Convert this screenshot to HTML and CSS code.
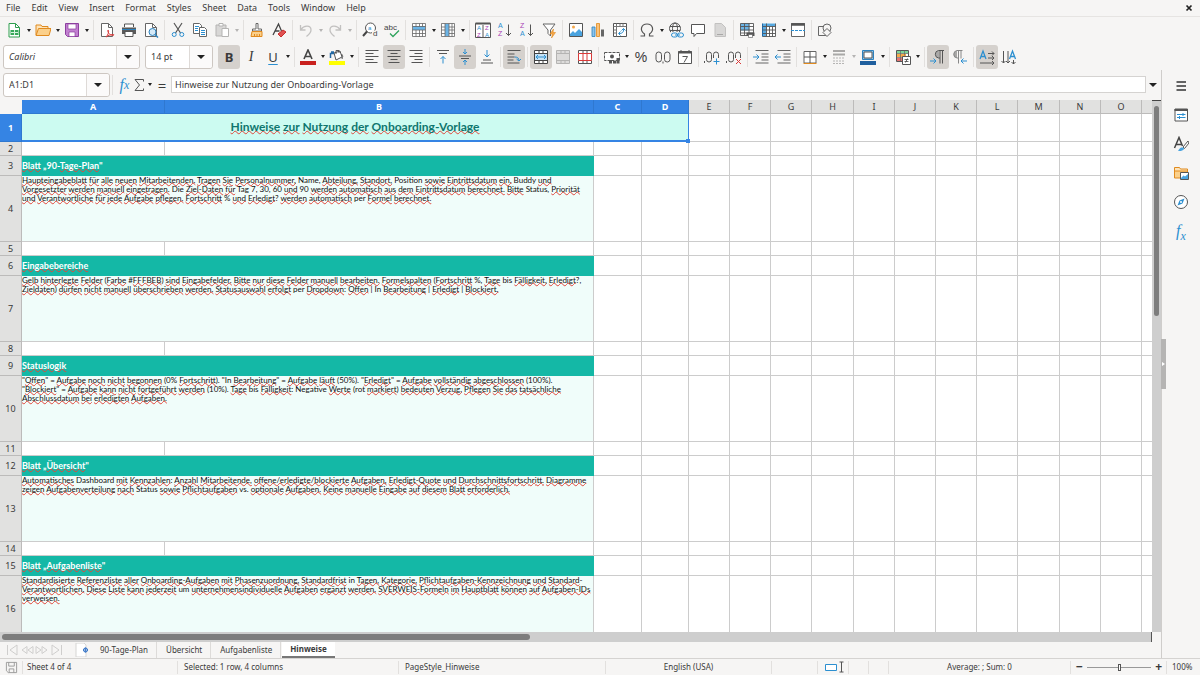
FILE: index.html
```
<!DOCTYPE html>
<html lang="de">
<head>
    <meta charset="UTF-8">
    <meta name="viewport" content="width=device-width, initial-scale=1.0">
    <title>Onboarding-Vorlage - Hinweise</title>
    <link rel="stylesheet" href="styles.css">
</head>
<body>
    <header class="menubar">
        <nav class="menus">
            <button>File</button><button>Edit</button><button>View</button><button>Insert</button><button>Format</button><button>Styles</button><button>Sheet</button><button>Data</button><button>Tools</button><button>Window</button><button>Help</button>
        </nav>
        <button class="close" aria-label="Close"><svg viewBox="0 0 8 8"><path d="M1.500 1.500l5 5M6.500 1.500l-5 5" stroke="#222" stroke-width="1.700"/></svg></button>
    </header>

    <div class="toolbar standard" role="toolbar" aria-label="Standard">
        <button class="tool" aria-label="New"><svg viewBox="0 0 16 16"><path d="M3 1.500h6.500l4 4V15H3z" fill="#fff" stroke="#2f9e4f"/><path d="M9.500 1.500v4h4" stroke="#2f9e4f"/><path d="M4.500 8h8v5h-8z" fill="#37a85a"/><path d="M5 10.500h7M8.500 8v5" stroke="#d7f3df"/></svg></button>
        <button class="drop" aria-label="New options"></button>
        <button class="tool" aria-label="Open"><svg viewBox="0 0 16 16"><path d="M1 13V3h5l1 1.500h6V7" fill="#fde3b8" stroke="#e08a1e"/><path d="M1 13.500L3.500 6.500H16l-2 7z" fill="#fbd08b" stroke="#e08a1e"/></svg></button>
        <button class="drop" aria-label="Open options"></button>
        <button class="tool" aria-label="Save"><svg viewBox="0 0 16 16"><path d="M1.500 1.500h13v13h-11l-2-2z" fill="#c17fd0" stroke="#8d3f9f"/><path d="M4 2h8v5H4zM5 10h6v4.500H5z" fill="#fff" stroke="#8d3f9f" stroke-width=".7"/></svg></button>
        <button class="drop" aria-label="Save options"></button>
        <span class="sep"></span>
        <button class="tool" aria-label="Export as PDF"><svg viewBox="0 0 16 16"><path d="M2.500 1.500h7l4 4v9h-11z" fill="#fff" stroke="#666"/><path d="M9.500 1.500v4h4" stroke="#666"/><path d="M7 15c2-2 3-5 2.500-6.500S8 9 10 11.500s4.500 2 5 1.500-3-1.500-8 2z" stroke="#d93a3a"/></svg></button>
        <button class="tool" aria-label="Print"><svg viewBox="0 0 16 16"><path d="M1 5.500h14v6.500H1z" fill="#5a5a5a"/><path d="M3.500 5V2h9v3" fill="#fff" stroke="#555"/><path d="M1 7.500h14" stroke="#2c81bd"/><path d="M4 9.500h8v5H4z" fill="#fff" stroke="#555"/></svg></button>
        <button class="tool" aria-label="Print Preview"><svg viewBox="0 0 16 16"><path d="M2.500 1.500h7l4 4v9h-11z" fill="#fff" stroke="#666"/><path d="M9.500 1.500v4h4" stroke="#666"/><circle cx="9.500" cy="10" r="3.500" fill="#d5e9f7" stroke="#2c81bd"/><path d="M12 12.500l3 3" stroke="#2c81bd" stroke-width="1.500"/></svg></button>
        <span class="sep"></span>
        <button class="tool" aria-label="Cut"><svg viewBox="0 0 16 16"><path d="M4 1l6.500 10M12 1L5.500 11" stroke="#555" stroke-width="1.200"/><circle cx="4.200" cy="12.500" r="2" stroke="#2c8fd0"/><circle cx="11.800" cy="12.500" r="2" stroke="#2c8fd0"/></svg></button>
        <button class="tool" aria-label="Copy"><svg viewBox="0 0 16 16"><path d="M1.500 1.500h6l2 2v8h-8z" fill="#fff" stroke="#666"/><path d="M3 4.500h4M3 6.500h3M3 8.500h3" stroke="#2c8fd0"/><path d="M7.500 5.500h5l2 2v7h-7z" fill="#fff" stroke="#666"/><path d="M9 8.500h4M9 10.500h4M9 12.500h4" stroke="#2c8fd0"/></svg></button>
        <button class="tool" aria-label="Paste" disabled><svg viewBox="0 0 16 16"><path d="M2 3h10v11H2z" fill="#d8d7d6" stroke="#b5b4b3"/><path d="M5 1.500h4V4H5z" fill="#fff" stroke="#b5b4b3"/><path d="M8 6.500h6.500v8H8z" fill="#fff" stroke="#b5b4b3"/></svg></button>
        <button class="drop" aria-label="Paste options" disabled></button>
        <span class="sep"></span>
        <button class="tool" aria-label="Clone Formatting"><svg viewBox="0 0 16 16"><path d="M7 1.500h2V7h3.500v2h-9V7H7z" fill="#fff" stroke="#666"/><path d="M3 9.500h10v5H2z" fill="#fbd08b" stroke="#e08a1e"/><path d="M5.500 14v-2M8 14v-2M10.500 14v-2" stroke="#e08a1e"/></svg></button>
        <button class="tool" aria-label="Clear Formatting"><svg viewBox="0 0 16 16"><path d="M2 13L7.500 2l3 7M4 9h4.500" stroke="#444" stroke-width="1.300"/><path d="M7 12l5-4 3 2-5 5z" fill="#e05252" stroke="#c92c2c"/></svg></button>
        <span class="sep"></span>
        <button class="tool" aria-label="Undo" disabled><svg viewBox="0 0 16 16"><path d="M2.500 3v5h5M3 7.500C6 3 13 3 13 8c0 3-2 4.500-4.500 6.500" stroke="#c2c1c0" stroke-width="1.300"/></svg></button>
        <button class="drop" aria-label="Undo list" disabled></button>
        <button class="tool" aria-label="Redo" disabled><svg viewBox="0 0 16 16"><path d="M13.500 3v5h-5M13 7.500C10 3 3 3 3 8c0 3 2 4.500 4.500 6.500" stroke="#c2c1c0" stroke-width="1.300"/></svg></button>
        <button class="drop" aria-label="Redo list" disabled></button>
        <span class="sep"></span>
        <button class="tool" aria-label="Find and Replace"><svg viewBox="0 0 16 16"><circle cx="8.500" cy="6" r="5" fill="#fff" stroke="#555"/><path d="M5 9.500L1 14" stroke="#444" stroke-width="2"/><path d="M10 8.500h6V15h-6z" fill="#f6f5f4"/><text x="6" y="8" font-size="6" fill="#2c8fd0">a</text><text x="11" y="14" font-size="8" fill="#444">d</text></svg></button>
        <button class="tool" aria-label="Spelling"><svg viewBox="0 0 16 16"><text x="0" y="8" font-size="8" fill="#444">abc</text><path d="M6 11.500l3 3 6-6" stroke="#2fa35c" stroke-width="1.300"/></svg></button>
        <span class="sep"></span>
        <button class="tool" aria-label="Row"><svg viewBox="0 0 16 16"><path d="M1.500 1.500h13v13h-13z" fill="#fff"/><path d="M2 4h12v4H2z" fill="#6bb4e6"/><path d="M1.500 1.500h13v13h-13zM1.500 4.500h13M1.500 8h13M1.500 11.500h13M5 1.500v3M5 8v6.500M8.500 1.500v3M8.500 8v6.500M11.500 1.500v3M11.500 8v6.500" stroke="#666" stroke-width=".8"/></svg></button>
        <button class="drop" aria-label="Row options"></button>
        <button class="tool" aria-label="Column"><svg viewBox="0 0 16 16"><path d="M1.500 1.500h13v13h-13z" fill="#fff"/><path d="M5 2h4v12H5z" fill="#6bb4e6"/><path d="M1.500 1.500h13v13h-13zM5 1.500v13M9 1.500v13M12 1.500v13M1.500 5H5M9 5h5.500M1.500 8H5M9 8h5.500M1.500 11.500H5M9 11.500h5.500" stroke="#666" stroke-width=".8"/></svg></button>
        <button class="drop" aria-label="Column options"></button>
        <span class="sep"></span>
        <button class="tool" aria-label="Sort"><svg viewBox="0 0 16 16"><path d="M.5 1.500h15v14H.5zM8 3v12" fill="#fff" stroke="#555"/><path d="M.5 1.500h15" stroke="#555" stroke-width="2"/><g font-size="6"><text x="2" y="8" fill="#2c8fd0">A</text><text x="2" y="14.500" fill="#a83fb5">Z</text><text x="10" y="8" fill="#a83fb5">Z</text><text x="10" y="14.500" fill="#2c8fd0">A</text></g></svg></button>
        <button class="tool" aria-label="Sort Ascending"><svg viewBox="0 0 16 16"><g font-size="7"><text x="1" y="6.400" fill="#2c8fd0">A</text><text x="1" y="14.400" fill="#a83fb5">Z</text></g><path d="M11.500 2.500v11M9 11l2.500 2.500L14 11" stroke="#555"/></svg></button>
        <button class="tool" aria-label="Sort Descending"><svg viewBox="0 0 16 16"><g font-size="7"><text x="1" y="6.400" fill="#a83fb5">Z</text><text x="1" y="14.400" fill="#2c8fd0">A</text></g><path d="M11.500 2.500v11M9 11l2.500 2.500L14 11" stroke="#555"/></svg></button>
        <button class="tool" aria-label="AutoFilter"><svg viewBox="0 0 16 16"><path d="M2 2h12L9.500 8v6L7 11.500V8z" fill="#fff" stroke="#666"/><path d="M12.500 7L9 12h2.500l-1 4 4-5.500H12z" fill="#f5a84a" stroke="#e08a1e" stroke-width=".6"/></svg></button>
        <span class="sep"></span>
        <button class="tool" aria-label="Insert Image"><svg viewBox="0 0 16 16"><path d="M1.500 1.500h13v13h-13z" fill="#fff" stroke="#555"/><circle cx="5.500" cy="5" r="1.500" fill="#f5a84a"/><path d="M2 12l3-3 2 2 4-4 3 3v4H2z" fill="#4aa3df"/></svg></button>
        <button class="tool" aria-label="Insert Chart"><svg viewBox="0 0 16 16"><path d="M2 5h3v9.500H2z" fill="#8cc4ec" stroke="#2c81bd" stroke-width=".8"/><path d="M6.500 1.500h3v13h-3z" fill="#fbc27a" stroke="#e08a1e" stroke-width=".8"/><path d="M11 7.500h3v7h-3z" fill="#666"/></svg></button>
        <button class="tool" aria-label="Pivot Table"><svg viewBox="0 0 16 16"><path d="M1.500 1.500h13v13h-13z" fill="#fff" stroke="#555"/><path d="M1.500 4.500h13M4.500 1.500v13M8 1.500v3M11 1.500v3M1.500 8h3M1.500 11h3" stroke="#777"/><path d="M7 11.500c3 0 5-1 4.500-5M8.500 9.500l-2 2 2 2M9.500 8.500l2-2 2 2" stroke="#2c8fd0"/></svg></button>
        <span class="sep"></span>
        <button class="tool" aria-label="Special Character"><svg viewBox="0 0 16 16"><path d="M1.500 14h4v-2C0 8 2.500 2 8 2s8 6 2.500 10v2h4" stroke="#555" stroke-width="1.200"/></svg></button>
        <button class="drop" aria-label="Special Character options"></button>
        <button class="tool" aria-label="Insert Hyperlink"><svg viewBox="0 0 16 16"><circle cx="7" cy="6.500" r="5.500" stroke="#555"/><ellipse cx="7" cy="6.500" rx="2.500" ry="5.500" stroke="#555"/><path d="M2 4.500h10M2 8.500h10" stroke="#555"/><path d="M3 10h13v6H3z" fill="#f6f5f4"/><rect x="3.500" y="11" width="6" height="4" rx="2" stroke="#2c8fd0"/><rect x="9.500" y="11" width="6" height="4" rx="2" stroke="#2c8fd0"/><path d="M7 13h5" stroke="#2c8fd0"/></svg></button>
        <button class="tool" aria-label="Insert Comment"><svg viewBox="0 0 16 16"><path d="M1.500 2.500h13v9H6.500L4 14.500v-3H1.500z" fill="#fff" stroke="#555"/></svg></button>
        <button class="tool" aria-label="Headers and Footers" disabled><svg viewBox="0 0 16 16"><path d="M3 1.500h6.500l4 4v9H3z" fill="#d8d7d6" stroke="#c2c1c0"/><path d="M5 12.500h6" stroke="#a9a8a7"/></svg></button>
        <span class="sep"></span>
        <button class="tool" aria-label="Define Print Area"><svg viewBox="0 0 16 16"><path d="M1.500 1.500h13v11h-13z" fill="#fff"/><path d="M1.500 1.500h9v7h-9z" fill="#6bb4e6"/><path d="M1.500 1.500h13v12h-13zM1.500 4.500h13M1.500 8h13M1.500 11h13M5.500 1.500v12M10 1.500v12" stroke="#555" stroke-width=".9"/><path d="M7.500 10.500h8V14h-8z" fill="#555"/><path d="M9.500 12.500h4v3h-4z" fill="#fff" stroke="#555" stroke-width=".6"/></svg></button>
        <button class="tool" aria-label="Freeze Rows and Columns"><svg viewBox="0 0 16 16"><path d="M1.500 1.500h13v13h-13z" fill="#fff"/><path d="M1.500 1.500h4v13h-4zM5 1.500h9.500v3H5z" fill="#58a9e0"/><path d="M1.500 4.500h13M5.500 1.500v13M8.500 4.500v10M11.500 4.500v10M1.500 8h13M1.500 11.500h13M14.500 1.500v13h-13" stroke="#555" stroke-width=".9"/><path d="M1.500 1.500v13" stroke="#2268a3"/></svg></button>
        <button class="drop" aria-label="Freeze options"></button>
        <button class="tool" aria-label="Split Window"><svg viewBox="0 0 16 16"><path d="M1.500 1.500h13v13h-13z" fill="#fff" stroke="#666"/><path d="M1 2.500h14" stroke="#555" stroke-width="2.500"/><path d="M1 8.500h14" stroke="#2c8fd0" stroke-dasharray="3 1"/></svg></button>
        <span class="sep"></span>
        <button class="tool" aria-label="Show Draw Functions"><svg viewBox="0 0 16 16"><path d="M1.500 4.500h8v9h-8z" stroke="#666"/><circle cx="10" cy="6" r="4" fill="#f6f5f4" stroke="#666"/><path d="M10 6.500l4 4-4 4-4-4z" fill="#f6f5f4" stroke="#666"/></svg></button>
    </div>

    <div class="toolbar formatting" role="toolbar" aria-label="Formatting">
        <div class="combo font-name">
            <input type="text" value="Calibri" aria-label="Font Name"><button aria-label="Font list"></button>
        </div>
        <div class="combo font-size">
            <input type="text" value="14 pt" aria-label="Font Size"><button aria-label="Size list"></button>
        </div>
        <button class="tool active letter bold" aria-label="Bold">B</button>
        <button class="tool letter italic" aria-label="Italic">I</button>
        <button class="tool letter underline" aria-label="Underline">U</button>
        <button class="drop" aria-label="Underline options"></button>
        <span class="sep"></span>
        <button class="tool" aria-label="Font Color"><svg viewBox="0 0 16 16"><path d="M4 10L8 1l4 9M5.500 7.500h5" stroke="#444" stroke-width="1.600"/><path d="M0 12h16v4H0z" fill="#c9211e"/></svg></button>
        <button class="drop" aria-label="Font Color options"></button>
        <button class="tool" aria-label="Highlighting"><svg viewBox="0 0 16 16"><path d="M5 4l6-2 2 6-6 3z" fill="#fff" stroke="#555"/><path d="M7 5V1.500h3V4M12.500 5c2 2 1 3 .5 5" stroke="#555"/><path d="M2 3h3M1.500 9V4.500h3.500" stroke="#2268a3" stroke-width="1.500"/><path d="M0 12h16v4H0z" fill="#ffff00"/></svg></button>
        <button class="drop" aria-label="Highlighting options"></button>
        <span class="sep"></span>
        <button class="tool" aria-label="Align Left"><svg viewBox="0 0 16 16"><path d="M1.500 1.500h13M1.500 4.500h8M1.500 7.500h13M1.500 10.500h8M1.500 13.500h12" stroke="#555"/></svg></button>
        <button class="tool active" aria-label="Center Horizontally"><svg viewBox="0 0 16 16"><path d="M1.500 1.500h13M4.500 4.500h7M1.500 7.500h13M4.500 10.500h7M2.500 13.500h11" stroke="#555"/></svg></button>
        <button class="tool" aria-label="Align Right"><svg viewBox="0 0 16 16"><path d="M1.500 1.500h13M6.500 4.500h8M1.500 7.500h13M6.500 10.500h8M3.500 13.500h11" stroke="#555"/></svg></button>
        <span class="sep"></span>
        <button class="tool" aria-label="Align Top"><svg viewBox="0 0 16 16"><path d="M2 1.500h12M4 4.500h8" stroke="#555"/><path d="M8 14.500v-7M5.500 10L8 7.500l2.500 2.500" stroke="#2c8fd0"/></svg></button>
        <button class="tool active" aria-label="Center Vertically"><svg viewBox="0 0 16 16"><path d="M2 7h12M4 9.500h8" stroke="#555"/><path d="M8 0v5M6 3l2 2 2-2M8 16v-5M6 13l2-2 2 2" stroke="#2c8fd0"/></svg></button>
        <button class="tool" aria-label="Align Bottom"><svg viewBox="0 0 16 16"><path d="M4 11h8M2 14h12" stroke="#555"/><path d="M8 1v7M5.500 5.500L8 8l2.500-2.500" stroke="#2c8fd0"/></svg></button>
        <span class="sep"></span>
        <button class="tool active" aria-label="Wrap Text"><svg viewBox="0 0 16 16"><path d="M1.500 1.500h13M1.500 5h7M1.500 8h7M1.500 11h6M1.500 14h12" stroke="#555"/><path d="M8.500 8c3 0 4.500 1 4.500 4M10.500 10l2.500 2 2-2" stroke="#2c8fd0"/></svg></button>
        <span class="sep"></span>
        <button class="tool active" aria-label="Merge and Center Cells"><svg viewBox="0 0 16 16"><path d="M1.500 1.500h13v13h-13z" fill="#fff"/><path d="M1.500 1.500h13v13h-13zM1.500 4.500h13M1.500 11.500h13M6 1.500v3M10 1.500v3M6 11.500v3M10 11.500v3" stroke="#444"/><path d="M2 5h12v6H2z" fill="#c6e2f6"/><path d="M3 8h10M5 6L3 8l2 2M11 6l2 2-2 2" stroke="#2c8fd0"/></svg></button>
        <button class="tool" aria-label="Merge Cells" disabled><svg viewBox="0 0 16 16"><path d="M1.500 1.500h13v13h-13z" fill="#dddcdb"/><path d="M1.500 1.500h13v13h-13zM1.500 4.500h13M1.500 11.500h13M6 1.500v3M10 1.500v3M6 11.500v3M10 11.500v3" stroke="#b5b4b3"/></svg></button>
        <button class="tool" aria-label="Split Cells"><svg viewBox="0 0 16 16"><path d="M1.500 1.500h13v13h-13z" fill="#fff"/><path d="M1.500 4.500v-3h13v3M1.500 11.500v3h13v-3M6 1.500v3M10 1.500v3M6 11.500v3M10 11.500v3" stroke="#555"/><path d="M1.500 4.500h13v7h-13zM6 4.500v7M10 4.500v7" stroke="#d93a3a"/></svg></button>
        <span class="sep"></span>
        <button class="tool" aria-label="Format as Currency"><svg viewBox="0 0 16 16"><path d="M.5 3.500h15v8H.5z" fill="#fff" stroke="#555" stroke-dasharray="3 1"/><circle cx="8" cy="7.500" r="2" fill="#555"/><path d="M5 11h3v3.500H5zM9 12h3v2.500H9zM12.500 9h3v5.500h-3z" fill="#555"/></svg></button>
        <button class="drop" aria-label="Currency options"></button>
        <button class="tool letter percent" aria-label="Format as Percent">%</button>
        <button class="tool" aria-label="Format as Number"><svg viewBox="0 0 16 16"><rect x="1" y="3" width="5.500" height="10" rx="2.700" stroke="#555"/><rect x="9.500" y="3" width="5.500" height="10" rx="2.700" stroke="#555"/><path d="M8 12.500v2" stroke="#555"/></svg></button>
        <button class="tool" aria-label="Format as Date"><svg viewBox="0 0 16 16"><path d="M1.500 2.500h13v12h-13z" fill="#fff" stroke="#555"/><path d="M1 3.500h14" stroke="#555" stroke-width="2"/><path d="M4 1v3M12 1v3" stroke="#555"/><path d="M5.500 7.500h5L7 13.500" stroke="#555"/></svg></button>
        <span class="sep"></span>
        <button class="tool" aria-label="Add Decimal Place"><svg viewBox="0 0 16 16"><path d="M.5 12v2" stroke="#555"/><rect x="2.500" y="3" width="5" height="10" rx="2.500" stroke="#555"/><rect x="9.500" y="3" width="5" height="10" rx="2.500" stroke="#555"/><path d="M9 9h7v7H9z" fill="#f6f5f4"/><path d="M12.500 9.500v6M9.500 12.500h6" stroke="#2c8fd0"/></svg></button>
        <button class="tool" aria-label="Delete Decimal Place"><svg viewBox="0 0 16 16"><path d="M.5 12v2" stroke="#555"/><rect x="2.500" y="3" width="5" height="10" rx="2.500" stroke="#555"/><rect x="9.500" y="3" width="5" height="10" rx="2.500" stroke="#555"/><path d="M9 9h7v7H9z" fill="#f6f5f4"/><path d="M10 10l5 5M15 10l-5 5" stroke="#d93a3a"/></svg></button>
        <span class="sep"></span>
        <button class="tool" aria-label="Increase Indent"><svg viewBox="0 0 16 16"><path d="M2.500 1.500h13M8.500 5h7M8.500 8h7M8.500 11h7M2.500 14h13" stroke="#666"/><path d="M0 8h6M3.500 5.500L6 8l-2.500 2.500" stroke="#2c8fd0"/></svg></button>
        <button class="tool" aria-label="Decrease Indent"><svg viewBox="0 0 16 16"><path d="M2.500 1.500h13M8.500 5h7M8.500 8h7M8.500 11h7M2.500 14h13" stroke="#666"/><path d="M6 8H0M2.500 5.500L0 8l2.500 2.500" stroke="#2c8fd0"/></svg></button>
        <span class="sep"></span>
        <button class="tool" aria-label="Borders"><svg viewBox="0 0 16 16"><path d="M2 2.500h12v11.500H2z" fill="#fff" stroke="#666"/><path d="M8 2.500v11.500M2 8h12" stroke="#555"/><path d="M1.500 14.500h13" stroke="#e08a1e"/></svg></button>
        <button class="drop" aria-label="Border options"></button>
        <button class="tool" aria-label="Border Style" disabled><svg viewBox="0 0 16 16"><path d="M2 2h12" stroke="#a9a8a7" stroke-width="2"/><path d="M2 5.500h12" stroke="#a9a8a7" stroke-width="2"/><path d="M2 9h12M2 12h12M2 14.500h12" stroke="#b5b4b3" stroke-dasharray="2 1"/></svg></button>
        <button class="drop" aria-label="Border Style options" disabled></button>
        <button class="tool" aria-label="Border Color"><svg viewBox="0 0 16 16"><path d="M2.500 1.500h11v9h-11z" fill="#8cc4ec" stroke="#2c81bd"/><path d="M4 3h8v6H4z" fill="#fff" stroke="#555"/><path d="M0 12h16v4H0z" fill="#1f5f9e"/></svg></button>
        <button class="drop" aria-label="Border Color options"></button>
        <span class="sep"></span>
        <button class="tool" aria-label="Conditional"><svg viewBox="0 0 16 16"><path d="M1.500 1.500h12v11h-12z" fill="#fff" stroke="#555"/><path d="M2 2h11v2.500H2z" fill="#7dd69b"/><path d="M2 5h9v3H2z" fill="#f5a84a"/><path d="M2 9h5v3H2z" fill="#e57373"/><path d="M1.500 4.500h12M1.500 8.500h7M5.500 1.500v11M9.500 1.500v5" stroke="#666" stroke-width=".7"/><path d="M7.500 7.500h8v8h-8z" fill="#fff" stroke="#555"/><path d="M9.500 10.500h4M9.500 12.500h4M12.500 9.500l-2 4" stroke="#444" stroke-width=".8"/></svg></button>
        <button class="drop" aria-label="Conditional options"></button>
        <span class="sep"></span>
        <button class="tool active" aria-label="Left-To-Right"><svg viewBox="0 0 16 16"><path d="M9 2a3.500 3.500 0 0 0 0 7z" fill="#aaa9a8"/><path d="M14 1.500H8.500a3.800 3.800 0 0 0 0 7.500H10M10 1.500v13M12.500 1.500v13" stroke="#555"/><path d="M0 12h6M3.500 9.500L6 12l-2.500 2.500" stroke="#2c8fd0"/></svg></button>
        <button class="tool" aria-label="Right-To-Left"><svg viewBox="0 0 16 16"><path d="M5 2a3.500 3.500 0 0 0 0 7z" fill="#a9a8a7"/><path d="M10.500 1.500H5a3.800 3.800 0 0 0 0 7.500h1.500M6.500 1.500v13M9 1.500v8" stroke="#888"/><path d="M15 12H9M11.500 9.500L9 12l2.500 2.500" stroke="#2c8fd0"/></svg></button>
        <span class="sep"></span>
        <button class="tool active" aria-label="Text direction left to right"><svg viewBox="0 0 16 16"><path d="M1 10l3-8 3 8M2 7.500h4" stroke="#2c8fd0" stroke-width="1.300"/><path d="M9 4.500h6M13 2.500l2 2-2 2M9 9h6M13 7l2 2-2 2M1 14h14M13 12l2 2-2 2" stroke="#555"/></svg></button>
        <button class="tool" aria-label="Text direction top to bottom"><svg viewBox="0 0 16 16"><path d="M8.500 10l3-8 3 8M9.500 7.500h4" stroke="#2c8fd0" stroke-width="1.300"/><path d="M2.500 2v12M.5 12l2 2 2-2M7 2v12M5 12l2 2 2-2M12.500 11v4M10.500 13l2 2 2-2" stroke="#555"/></svg></button>
    </div>

    <div class="workspace">
        <main class="document">
            <div class="formula-bar">
                <div class="combo name-box">
                    <input type="text" value="A1:D1" aria-label="Name Box"><button aria-label="Names"></button>
                </div>
                <span class="sep"></span>
                <button class="tool fx" aria-label="Function Wizard">f<sub>x</sub></button>
                <button class="sum" aria-label="Select Function"><svg viewBox="0 0 12 14"><path d="M9.500 3.500V1.500H1l4.500 5.500L1 12.500h8.500v-2" stroke="#555"/></svg></button>
                <button class="drop" aria-label="Functions"></button>
                <button class="equals" aria-label="Formula">=</button>
                <input class="formula" type="text" value="Hinweise zur Nutzung der Onboarding-Vorlage" aria-label="Input line">
                <button class="expand" aria-label="Expand Formula Bar"></button>
            </div>

            <div class="sheet-area">
                <div class="sheet">
                    <table>
                        <colgroup>
                            <col class="c-head"><col class="c-a"><col class="c-b"><col class="c-c"><col class="c-d">
                            <col class="c-41"><col class="c-41"><col class="c-41"><col class="c-42"><col class="c-41"><col class="c-41"><col class="c-41"><col class="c-41"><col class="c-42"><col class="c-41"><col class="c-41">
                            <col>
                        </colgroup>
                        <thead>
                            <tr><th class="corner"></th><th class="sel">A</th><th class="sel">B</th><th class="sel">C</th><th class="sel">D</th><th>E</th><th>F</th><th>G</th><th>H</th><th>I</th><th>J</th><th>K</th><th>L</th><th>M</th><th>N</th><th>O</th><th></th></tr>
                        </thead>
                        <tbody id="rows">
                            <tr class="r-title"><th class="sel">1</th><td class="title" colspan="4">Hinweise zur Nutzung der Onboarding-Vorlage<i class="fill-handle"></i></td></tr>
                            <tr class="r-gap"><th>2</th><td></td><td></td><td></td><td></td></tr>
                            <tr class="r-band"><th>3</th><td class="band" colspan="2">Blatt „90-Tage-Plan"</td><td></td><td></td></tr>
                            <tr class="r-note"><th>4</th><td class="note" colspan="2">Haupteingabeblatt für alle neuen Mitarbeitenden. Tragen Sie Personalnummer, Name, Abteilung, Standort, Position sowie Eintrittsdatum ein. Buddy und<br>Vorgesetzter werden manuell eingetragen. Die Ziel-Daten für Tag 7, 30, 60 und 90 werden automatisch aus dem Eintrittsdatum berechnet. Bitte Status, Priorität<br>und Verantwortliche für jede Aufgabe pflegen. Fortschritt % und Erledigt? werden automatisch per Formel berechnet.</td><td></td><td></td></tr>
                            <tr class="r-gap"><th>5</th><td></td><td></td><td></td><td></td></tr>
                            <tr class="r-band"><th>6</th><td class="band" colspan="2">Eingabebereiche</td><td></td><td></td></tr>
                            <tr class="r-note"><th>7</th><td class="note" colspan="2">Gelb hinterlegte Felder (Farbe #FFFBEB) sind Eingabefelder. Bitte nur diese Felder manuell bearbeiten. Formelspalten (Fortschritt %, Tage bis Fälligkeit, Erledigt?,<br>Zieldaten) dürfen nicht manuell überschrieben werden. Statusauswahl erfolgt per Dropdown: Offen | In Bearbeitung | Erledigt | Blockiert.</td><td></td><td></td></tr>
                            <tr class="r-gap"><th>8</th><td></td><td></td><td></td><td></td></tr>
                            <tr class="r-band"><th>9</th><td class="band" colspan="2">Statuslogik</td><td></td><td></td></tr>
                            <tr class="r-note"><th>10</th><td class="note" colspan="2">"Offen" = Aufgabe noch nicht begonnen (0% Fortschritt). "In Bearbeitung" = Aufgabe läuft (50%). "Erledigt" = Aufgabe vollständig abgeschlossen (100%).<br>"Blockiert" = Aufgabe kann nicht fortgeführt werden (10%). Tage bis Fälligkeit: Negative Werte (rot markiert) bedeuten Verzug. Pflegen Sie das tatsächliche<br>Abschlussdatum bei erledigten Aufgaben.</td><td></td><td></td></tr>
                            <tr class="r-gap"><th>11</th><td></td><td></td><td></td><td></td></tr>
                            <tr class="r-band"><th>12</th><td class="band" colspan="2">Blatt „Übersicht"</td><td></td><td></td></tr>
                            <tr class="r-note"><th>13</th><td class="note" colspan="2">Automatisches Dashboard mit Kennzahlen: Anzahl Mitarbeitende, offene/erledigte/blockierte Aufgaben, Erledigt-Quote und Durchschnittsfortschritt. Diagramme<br>zeigen Aufgabenverteilung nach Status sowie Pflichtaufgaben vs. optionale Aufgaben. Keine manuelle Eingabe auf diesem Blatt erforderlich.</td><td></td><td></td></tr>
                            <tr class="r-gap"><th>14</th><td></td><td></td><td></td><td></td></tr>
                            <tr class="r-band"><th>15</th><td class="band" colspan="2">Blatt „Aufgabenliste"</td><td></td><td></td></tr>
                            <tr class="r-note"><th>16</th><td class="note" colspan="2">Standardisierte Referenzliste aller Onboarding-Aufgaben mit Phasenzuordnung, Standardfrist in Tagen, Kategorie, Pflichtaufgaben-Kennzeichnung und Standard-<br>Verantwortlichen. Diese Liste kann jederzeit um unternehmensindividuelle Aufgaben ergänzt werden. SVERWEIS-Formeln im Hauptblatt können auf Aufgaben-IDs<br>verweisen.</td><td></td><td></td></tr>
                        </tbody>
                    </table>
                </div>
                <div class="vscroll"><div class="thumb"></div></div>
            </div>
            <div class="hscroll"><div class="thumb"></div></div>

            <div class="tabs">
                <div class="tab-nav">
                    <button aria-label="First sheet"><svg viewBox="0 0 14 12"><path d="M2.500 1v10M12 1L5 6l7 5z" stroke="#cfcecd"/></svg></button><button aria-label="Previous sheet"><svg viewBox="0 0 14 12"><path d="M7 2.500L2 6l5 3.500zM13 2.500L8 6l5 3.500z" stroke="#cfcecd"/></svg></button><button aria-label="Next sheet"><svg viewBox="0 0 14 12"><path d="M1 2.500L6 6 1 9.500zM7 2.500L12 6 7 9.500z" stroke="#cfcecd"/></svg></button><button aria-label="Last sheet"><svg viewBox="0 0 14 12"><path d="M11.500 1v10M2 1l7 5-7 5z" stroke="#cfcecd"/></svg></button>
                </div>
                <button class="add-tab" aria-label="Add Sheet"><svg viewBox="0 0 14 14"><path d="M1 0h8l2 2v12H1z" fill="#fff" stroke="#d6d5d4"/><circle cx="10.500" cy="7" r="2" fill="#fff" stroke="#2f6fc4"/><path d="M10.500 4.500v5M8 7h5" stroke="#2f6fc4" stroke-width=".8"/></svg></button>
                <button class="tab">90-Tage-Plan</button>
                <button class="tab">Übersicht</button>
                <button class="tab">Aufgabenliste</button>
                <button class="tab current">Hinweise</button>
            </div>
        </main>

        <aside class="sidebar">
            <button aria-label="Sidebar Settings"><svg viewBox="0 0 16 16"><path d="M3.500 4h9.500M3.500 8h9.500M3.500 12h9.500" stroke="#333" stroke-width="1.500"/></svg></button>
            <button aria-label="Properties"><svg viewBox="0 0 16 16"><path d="M2 2h12.500v12H2z" fill="#fff" stroke="#555"/><path d="M1.500 3h13.500" stroke="#555" stroke-width="2"/><path d="M4 7.500h8.500M4 10.500h8.500M10 6v3M6.500 9v3" stroke="#2c8fd0"/></svg></button>
            <button aria-label="Styles"><svg viewBox="0 0 16 16"><path d="M1.500 12L6 1.500 9.500 10M3 8.500h5.500" stroke="#444" stroke-width="1.500"/><path d="M15 5l-5 6 1.500 1.500L16 7z" fill="#fff" stroke="#555"/><path d="M5 15c1-1 1.500-4 4.500-3.500s1.500 4-4.500 3.500z" fill="#4aa3df"/></svg></button>
            <button aria-label="Gallery"><svg viewBox="0 0 16 16"><path d="M1.500 12V2.500h5l1 1.500h7v3" fill="#fde3b8" stroke="#e08a1e"/><path d="M1.500 13V6h13v7z" fill="#fbd08b" stroke="#e08a1e"/><path d="M7.500 7.500h8v7h-8z" fill="#fff" stroke="#555"/><path d="M8 13l2.500-2.500 1.500 1 3-2.500v5H8z" fill="#4aa3df"/></svg></button>
            <button aria-label="Navigator"><svg viewBox="0 0 16 16"><circle cx="8" cy="8" r="6.500" fill="#fff" stroke="#555"/><path d="M11.500 4.500L9.500 9.500l-5 2 2-5z" fill="#2c8fd0"/><circle cx="8" cy="8" r="1" fill="#fff"/></svg></button>
            <button class="fx" aria-label="Functions">f<sub>x</sub></button>
            <div class="grip"></div>
        </aside>
    </div>

    <footer class="status">
        <span class="doc-state"><svg viewBox="0 0 14 14"><path d="M1.500 1.500h11v11h-9l-2-2zM4 1.500v4h6v-4M4.500 12.500v-4h5v4" stroke="#999"/></svg></span>
        <span class="s-sheet">Sheet 4 of 4</span>
        <span class="s-selected">Selected: 1 row, 4 columns</span>
        <span class="s-style">PageStyle_Hinweise</span>
        <span class="s-lang">English (USA)</span>
        <span class="s-insert"></span>
        <span class="s-mode"><svg viewBox="0 0 22 12"><path d="M1.500 3.500h11v6h-11z" fill="#fff" stroke="#2c8fd0"/><path d="M15.500 1h4M17.500 1v10M15.500 11h4" stroke="#555"/></svg></span>
        <span class="s-small"></span>
        <span class="s-small"></span>
        <span class="s-sum">Average: ; Sum: 0</span>
        <span class="s-zoom"><button aria-label="Zoom Out">−</button><input type="range" min="0" max="100" value="50" aria-label="Zoom"><button aria-label="Zoom In">+</button></span>
        <span class="s-percent">100%</span>
    </footer>

    <script src="sheet.js"></script>
</body>
</html>
```
FILE: sheet.js
```
// words the English dictionary accepts, everything else gets the red wave
var known = ['Name', 'Position', 'Buddy', 'Die', 'Tag', 'Status', 'per', 'In', 'in', 'um', 'bis', 'Negative', 'rot', 'Dashboard', 'vs'];

function markSpelling(node) {
    if (node.nodeType !== Node.TEXT_NODE) return;
    var parts = node.textContent.split(/([A-Za-zÄÖÜäöüß]{2,}(?:[-\/][A-Za-zÄÖÜäöüß]+)*[.,]?)/);
    var out = document.createDocumentFragment();
    parts.forEach(function (part, i) {
        if (i % 2 && known.indexOf(part.replace(/[.,]/, '')) === -1) {
            var u = document.createElement('u');
            u.textContent = part;
            out.appendChild(u);
        } else {
            out.appendChild(document.createTextNode(part));
        }
    });
    node.replaceWith(out);
}

document.querySelectorAll('.title, .band, .note').forEach(function (cell) {
    Array.from(cell.childNodes).forEach(markSpelling);
});

// empty cells E to P
document.querySelectorAll('#rows tr').forEach(function (row) {
    for (var i = 0; i < 12; i++) row.insertCell();
});
```
FILE: styles.css
```
:root {
    --bg: #f6f5f4;
    --line: #d5d3d1;
    --grid: #cccccc;
    --head: #e1e1e0;
    --select: #3584e4;
    --text: #3a3a3a;
}

* {
    margin: 0;
    padding: 0;
    box-sizing: border-box;
}

body {
    height: 100vh;
    display: flex;
    flex-direction: column;
    overflow: hidden;
    background: var(--bg);
    color: var(--text);
    font: 9px/12px "Noto Sans", sans-serif;
}

button, input {
    font: inherit;
    color: inherit;
    border: 0;
    background: none;
    min-width: 0;
}

svg {
    display: block;
    fill: none;
    font-family: "Liberation Sans", sans-serif;
}

/* menu */
.menubar {
    flex: 0 0 17px;
    display: flex;
    justify-content: space-between;
    align-items: center;
    border-bottom: 1px solid #e6e4e2;
}

.menus {
    display: flex;
    gap: 11px;
    padding-left: 6px;
}

.close {
    width: 8px;
    height: 8px;
    margin-right: 7px;
}

/* toolbars */
.toolbar {
    flex: 0 0 27px;
    display: flex;
    align-items: center;
}

.standard {
    flex-basis: 26px;
    padding-left: 3px;
}

.formatting {
    padding-left: 3px;
}

.tool {
    flex: 0 0 22px;
    height: 24px;
    display: flex;
    align-items: center;
    justify-content: center;
    border-radius: 3px;
}

.tool svg {
    width: 16px;
    height: 16px;
}

.tool.active {
    background: #d5d1cd;
}

.letter {
    font-size: 14px;
    line-height: 22px;
}

.bold { font-weight: 700; font-size: 13px; }
.italic { font-family: "Liberation Serif", serif; font-style: italic; }
.underline { text-decoration: underline #2c8fd0; text-underline-offset: 2px; font-size: 13px; }
.percent { font-family: "Liberation Sans", sans-serif; }

.drop {
    flex: 0 0 7px;
    height: 24px;
    display: flex;
    align-items: center;
    justify-content: center;
}

.drop::before, .combo button::before, .expand::before {
    content: '';
    border: 2px solid transparent;
    border-top: 3px solid #222;
    border-bottom: 0;
}

.drop:disabled::before {
    border-top-color: #b5b4b3;
}

.combo button::before, .expand::before {
    border-width: 4px 4px 0;
}

.sep {
    flex: 0 0 1px;
    height: 20px;
    margin: 0 2px;
    background: #e2e0de;
}

.drop + .sep {
    margin-left: 3px;
}

.combo {
    display: flex;
    height: 24px;
    background: #fff;
    border: 1px solid #cdc7c2;
    border-radius: 3px;
}

.combo input {
    flex: 1;
    padding-left: 5px;
}

.combo button {
    flex: 0 0 23px;
    display: flex;
    align-items: center;
    justify-content: center;
    border-left: 1px solid #dedad7;
    background: #fbfafa;
    border-radius: 0 3px 3px 0;
}

.font-name { width: 137px; margin-right: 5px; }
.font-name input { font-style: italic; }
.font-size { width: 68px; margin-right: 5px; }
.name-box { width: 107px; }

/* workspace */
.workspace {
    flex: 1;
    min-height: 0;
    display: flex;
}

.document {
    flex: 1;
    min-width: 0;
    display: flex;
    flex-direction: column;
}

.formula-bar {
    flex: 0 0 30px;
    display: flex;
    align-items: center;
    padding: 0 4px 1px 3px;
}

.fx {
    font: italic 16px/16px "Liberation Serif", serif;
    color: #2c8fd0;
}

.fx sub {
    font-size: 12px;
    line-height: 12px;
}

.formula-bar .fx {
    flex-basis: 19px;
}

.sum svg {
    width: 12px;
    height: 14px;
}

.equals {
    width: 18px;
    font-size: 15px;
}

.formula {
    flex: 1;
    height: 17px;
    padding-left: 3px;
    background: #fff;
    border: 1px solid #d5d3d1;
}

.expand {
    width: 11px;
    display: flex;
    justify-content: flex-end;
}

/* grid */
.sheet-area {
    flex: 1;
    min-height: 0;
    display: flex;
}

.sheet {
    flex: 1;
    min-width: 0;
    overflow: hidden;
    background: #fff;
}

table {
    width: 100%;
    table-layout: fixed;
    border-collapse: separate;
    border-spacing: 0;
}

.c-head { width: 22px; }
.c-a { width: 143px; }
.c-b { width: 429px; }
.c-c { width: 48px; }
.c-d { width: 47px; }
.c-41 { width: 41px; }
.c-42 { width: 42px; }

th, td {
    border-right: 1px solid var(--grid);
    border-bottom: 1px solid var(--grid);
}

th {
    background: var(--head);
    border-color: #bcbbba;
    font-weight: 400;
}

thead th {
    height: 14px;
    line-height: 13px;
}

th.sel {
    background: var(--select);
    border-color: #2f78d0;
    color: #fff;
    font-weight: 700;
}

th.corner {
    background: var(--bg);
    border-color: var(--bg);
}

tr > :last-child {
    border-right: 0;
}

.r-title { height: 28px; }
.r-gap { height: 14px; line-height: 12px; }
.r-band { height: 20px; }
.r-note { height: 66px; }

.title {
    position: relative;
    text-align: center;
    font: 700 12px/14px Lato, sans-serif;
    color: #0f766e;
    background: #ccfbf1;
    border-right: 1px solid var(--select);
    border-bottom: 2px solid var(--select);
}

.fill-handle {
    position: absolute;
    right: -2px;
    bottom: -3px;
    width: 4px;
    height: 4px;
    background: var(--select);
}

.band {
    font: 700 9px/12px Lato, sans-serif;
    color: #fff;
    background: #14b8a6;
    border-color: #14b8a6;
}

.note {
    vertical-align: top;
    font: 8px/9px Lato, sans-serif;
    color: #111;
    white-space: nowrap;
    background: #f0fdfa;
}

.note u, .band u, .title u {
    text-decoration: underline wavy #e0453a 1px;
    text-decoration-skip-ink: none;
    text-underline-offset: -1px;
}

/* scrollbars */
.vscroll {
    flex: 0 0 9px;
    padding: 5px 2px 0;
    background: #cecece;
    border-top: 1px solid #444;
}

.vscroll .thumb {
    height: 40%;
    border-radius: 3px;
    background: #7d7d7d;
}

.hscroll {
    flex: 0 0 10px;
    margin-right: 9px;
    padding: 2px;
    background: #cecece;
    border-right: 1px solid #555;
}

.hscroll .thumb {
    width: 46%;
    height: 6px;
    border-radius: 3px;
    background: #7d7d7d;
}

/* sheet tabs */
.tabs {
    flex: 0 0 16px;
    display: flex;
    padding-left: 5px;
    font-size: 8px;
}

.tab-nav {
    display: flex;
    gap: 1px;
    align-items: center;
    margin-right: 11px;
}

.tab-nav svg {
    width: 14px;
    height: 12px;
}

.add-tab {
    margin-right: 3px;
}

.add-tab svg {
    width: 14px;
    height: 14px;
}

.tab {
    padding: 0 8px;
    margin-right: 1px;
    border-right: 1px solid #dddbd9;
}

.tab.current {
    background: #fff;
    border-right: 0;
    border-bottom: 2px solid #777;
    font-weight: 700;
}

/* sidebar */
.sidebar {
    position: relative;
    flex: 0 0 39px;
    display: flex;
    flex-direction: column;
    align-items: center;
    gap: 13px;
    padding-top: 8px;
    border-left: 1px solid #cfcdcb;
}

.sidebar button {
    width: 16px;
    height: 16px;
}

.grip {
    position: absolute;
    left: -1px;
    top: 269px;
    width: 5px;
    height: 50px;
    background: #b5b4b3;
}

.grip::before {
    content: '';
    position: absolute;
    left: 1px;
    top: 23px;
    border: 2px solid transparent;
    border-left: 3px solid #fff;
    border-right: 0;
}

/* status bar */
.status {
    flex: 0 0 17px;
    display: flex;
    align-items: center;
    border-top: 1px solid var(--line);
    font-size: 8px;
}

.status > span {
    height: 13px;
    border-right: 1px solid #e2e0de;
}

.doc-state { width: 23px; padding-left: 5px; }
.doc-state svg { width: 13px; height: 13px; }
.s-sheet { width: 155px; padding-left: 4px; }
.s-selected { width: 221px; padding-left: 6px; }
.s-style { width: 207px; padding-left: 6px; }
.s-lang { flex: 1; text-align: center; }
.s-insert { width: 46px; }
.s-mode { width: 31px; padding-left: 6px; }
.s-mode svg { width: 22px; height: 12px; }
.s-small { width: 20px; }
.s-sum { width: 182px; text-align: center; }

.s-zoom {
    width: 96px;
    display: flex;
    align-items: center;
    gap: 4px;
    padding: 0 4px 0 5px;
}

.s-zoom button {
    font-size: 12px;
    font-weight: 700;
}

.s-zoom input {
    appearance: none;
    flex: 1;
    height: 7px;
    background: linear-gradient(#999, #999) center / 100% 1px no-repeat;
}

.s-zoom input::-webkit-slider-thumb {
    appearance: none;
    width: 3px;
    height: 7px;
    background: #fff;
    border: 1px solid #555;
}

.status > .s-percent {
    width: 33px;
    padding-left: 5px;
    border: 0;
}
```
